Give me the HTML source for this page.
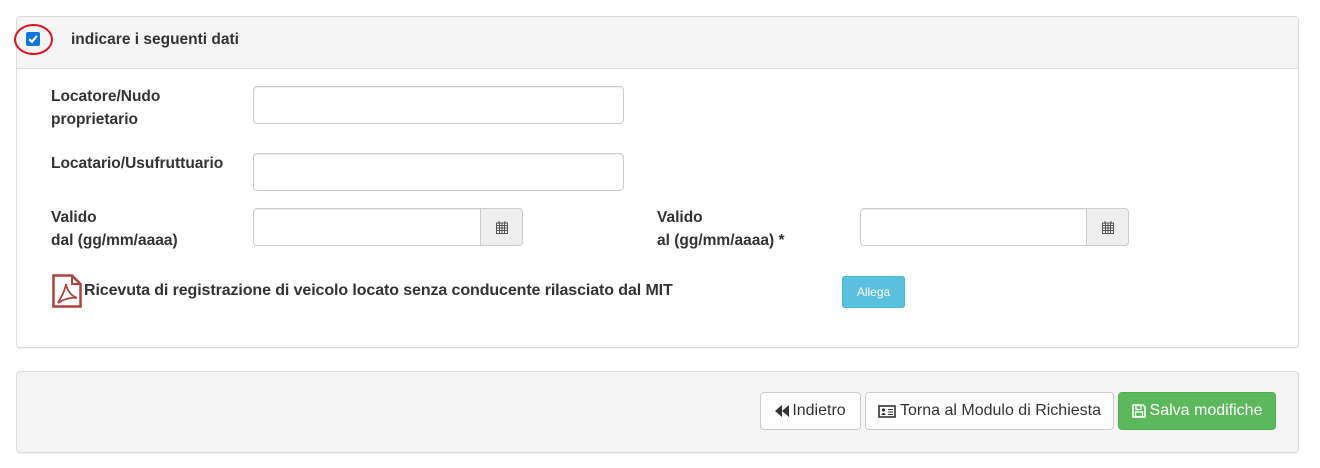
<!DOCTYPE html>
<html><head><meta charset="utf-8"><style>
body{margin:0;width:1320px;height:468px;background:#fff;font-family:"Liberation Sans",Arial,sans-serif;color:#333;position:relative;overflow:hidden}
.a{position:absolute}
.panel{position:absolute;left:16px;width:1281px;border:1px solid #ddd;border-radius:4px;box-shadow:0 1px 1px rgba(0,0,0,.05)}
.lbl{position:absolute;font-weight:bold;font-size:15.5px;line-height:23px}
.inp{position:absolute;border:1px solid #ccc;border-radius:4px;background:#fff;box-shadow:inset 0 1px 1px rgba(0,0,0,.075)}
.add{position:absolute;border:1px solid #ccc;border-radius:0 4px 4px 0;background:#eee;display:flex;align-items:center;justify-content:center}
.btn{position:absolute;border:1px solid #ccc;border-radius:4px;background:#fff;font-size:16px;display:flex;align-items:center;justify-content:center;box-sizing:border-box;color:#333}
</style></head><body>
<div class="panel" style="top:16px;height:330px">
  <div class="a" style="left:0;top:0;width:1281px;height:51px;background:#f5f5f5;border-bottom:1px solid #ddd;border-radius:4px 4px 0 0"></div>
</div>
<div class="a" style="left:14px;top:24px;width:35px;height:27px;border:2.5px solid #e0141e;border-radius:50%"></div>
<div class="a" style="left:26px;top:32px;width:14px;height:14px;background:#0b75e0;border-radius:2px">
<svg width="14" height="14" viewBox="0 0 14 14"><path d="M3.2 7.2 L6 9.8 L10.8 4" stroke="#fff" stroke-width="2.2" fill="none"/></svg></div>
<div class="lbl" style="left:71px;top:28px">indicare i seguenti dati</div>

<div class="lbl" style="left:51px;top:85px">Locatore/Nudo<br>proprietario</div>
<div class="inp" style="left:253px;top:86px;width:369px;height:36px"></div>
<div class="lbl" style="left:51px;top:152px">Locatario/Usufruttuario</div>
<div class="inp" style="left:253px;top:153px;width:369px;height:36px"></div>

<div class="lbl" style="left:51px;top:206px">Valido<br>dal (gg/mm/aaaa)</div>
<div class="inp" style="left:253px;top:208px;width:227px;height:36px;border-radius:4px 0 0 4px"></div>
<div class="add" style="left:480px;top:208px;width:41px;height:36px"><svg width="14" height="15" viewBox="0 0 14 15"><rect x="1.5" y="3" width="11" height="10.5" fill="none" stroke="#555"/><path d="M1.5 5.5h11M1.5 8h11M1.5 10.5h11M4.5 3v10M7 3v10M9.5 3v10M4 1v3M10 1v3" stroke="#555" stroke-width="1"/></svg></div>

<div class="lbl" style="left:657px;top:206px">Valido<br>al (gg/mm/aaaa) *</div>
<div class="inp" style="left:860px;top:208px;width:226px;height:36px;border-radius:4px 0 0 4px"></div>
<div class="add" style="left:1086px;top:208px;width:41px;height:36px"><svg width="14" height="15" viewBox="0 0 14 15"><rect x="1.5" y="3" width="11" height="10.5" fill="none" stroke="#555"/><path d="M1.5 5.5h11M1.5 8h11M1.5 10.5h11M4.5 3v10M7 3v10M9.5 3v10M4 1v3M10 1v3" stroke="#555" stroke-width="1"/></svg></div>

<svg class="a" style="left:52px;top:274px" width="30" height="34" viewBox="0 0 30 34"><path d="M1.5 1.5H20L28.5 10V32.5H1.5Z" fill="#fff" stroke="#b0413e" stroke-width="2.5"/><path d="M20 1.5V10H28.5" fill="none" stroke="#b0413e" stroke-width="2"/><path d="M6 29 C10 22 13 16 14 10 C15 16 18 21 25 24 C18 23 12 25 6 29Z" fill="none" stroke="#b0413e" stroke-width="1.8"/></svg>
<div class="lbl" style="left:84px;top:279px;font-size:16px;letter-spacing:-0.1px">Ricevuta di registrazione di veicolo locato senza conducente rilasciato dal MIT</div>
<div class="a" style="left:842px;top:276px;width:63px;height:32px;background:#5bc0de;border:1px solid #46b8da;box-sizing:border-box;border-radius:3px;color:#fff;font-size:12px;display:flex;align-items:center;justify-content:center">Allega</div>

<div class="panel" style="top:371px;height:80px;background:#f5f5f5"></div>
<div class="btn" style="left:760px;top:392px;width:101px;height:38px"><svg width="14" height="12" viewBox="0 0 14 12" style="margin-right:3px"><path d="M7 0V12L0 6ZM14 0V12L7 6Z" fill="#333"/></svg>Indietro</div>
<div class="btn" style="left:865px;top:392px;width:249px;height:38px"><svg width="18" height="13" viewBox="0 0 18 13" style="margin-right:4px"><rect x="1" y="1" width="16" height="11" fill="none" stroke="#333" stroke-width="1.6"/><circle cx="5.5" cy="5" r="1.6" fill="#333"/><path d="M3 10 Q5.5 6 8 10Z" fill="#333"/><path d="M10 4.5h5M10 7h5M10 9.5h5" stroke="#333"/></svg>Torna al Modulo di Richiesta</div>
<div class="btn" style="left:1118px;top:392px;width:158px;height:38px;background:#5cb85c;border-color:#4cae4c;color:#fff"><svg width="14" height="14" viewBox="0 0 14 14" style="margin-right:4px"><path d="M1 1H11L13 3V13H1Z" fill="none" stroke="#fff" stroke-width="1.6"/><rect x="4" y="1.5" width="5" height="4" fill="none" stroke="#fff" stroke-width="1.3"/><rect x="3.5" y="8" width="7" height="4.5" fill="none" stroke="#fff" stroke-width="1.3"/></svg>Salva modifiche</div>
</body></html>
